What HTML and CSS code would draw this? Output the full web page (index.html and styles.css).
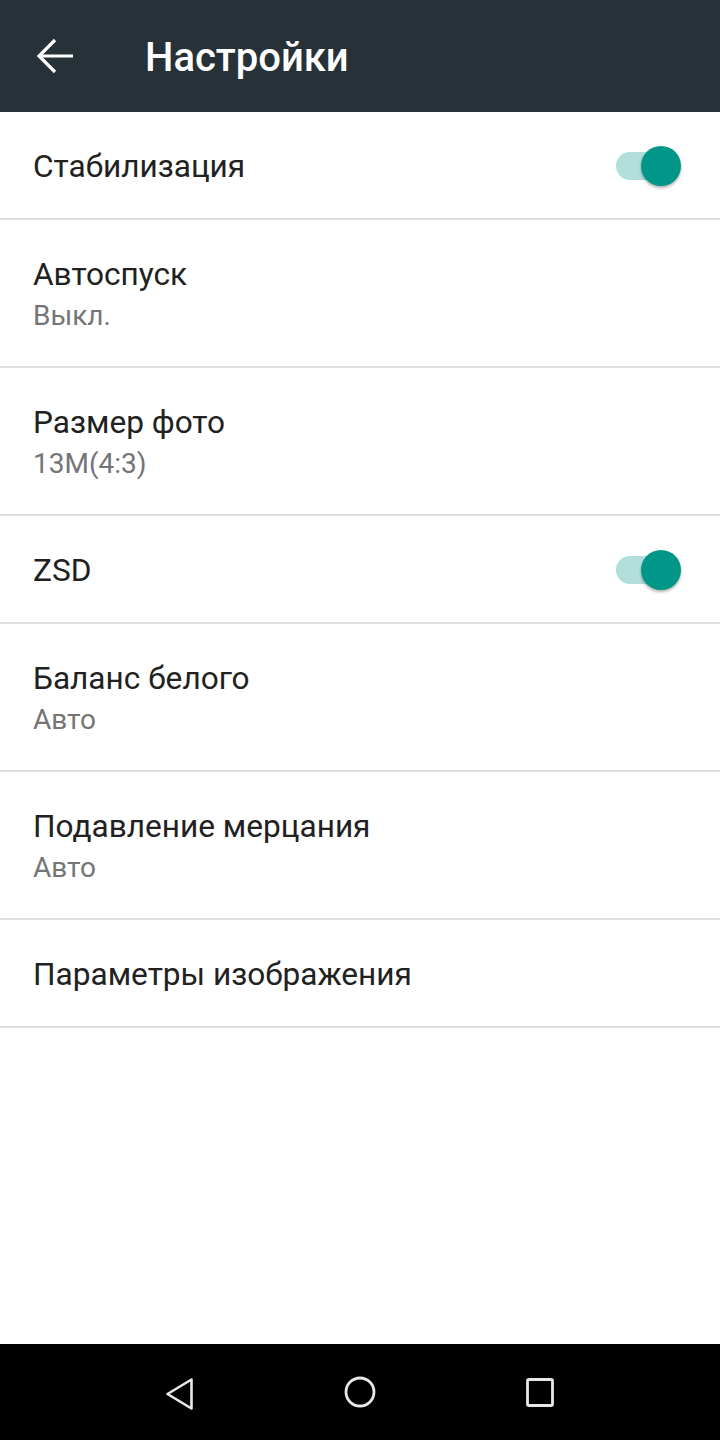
FILE: index.html
```html
<!DOCTYPE html>
<html lang="ru">
<head>
  <meta charset="UTF-8">
  <meta name="viewport" content="width=device-width, initial-scale=1.0">
  <title>Настройки</title>
  <link rel="stylesheet" href="styles.css">
</head>
<body>
  <div class="screen">
    <div class="toolbar">
      <svg class="back" width="48" height="48" viewBox="0 0 48 48">
        <path d="M41 24H8 M23 8L7 24L23 40" fill="none" stroke="#fff" stroke-width="3.2" stroke-linecap="butt" stroke-linejoin="miter"/>
      </svg>
      <div class="title">Настройки</div>
    </div>

    <div class="list">
      <div class="row single">
        <div class="label">Стабилизация</div>
        <div class="switch"><div class="track"></div><div class="thumb"></div></div>
      </div>
      <div class="row double">
        <div class="label">Автоспуск</div>
        <div class="value">Выкл.</div>
      </div>
      <div class="row double">
        <div class="label">Размер фото</div>
        <div class="value">13M(4:3)</div>
      </div>
      <div class="row single">
        <div class="label">ZSD</div>
        <div class="switch"><div class="track"></div><div class="thumb"></div></div>
      </div>
      <div class="row double">
        <div class="label">Баланс белого</div>
        <div class="value">Авто</div>
      </div>
      <div class="row double">
        <div class="label">Подавление мерцания</div>
        <div class="value">Авто</div>
      </div>
      <div class="row single">
        <div class="label">Параметры изображения</div>
      </div>
    </div>

    <div class="navbar">
      <svg width="40" height="40" viewBox="0 0 40 40">
        <path d="M31.5 7.5V36.5L7.5 22Z" fill="none" stroke="#e8e8e8" stroke-width="2.6" stroke-linejoin="round"/>
      </svg>
      <svg width="40" height="40" viewBox="0 0 40 40">
        <circle cx="20" cy="20" r="14" fill="none" stroke="#e8e8e8" stroke-width="2.8"/>
      </svg>
      <svg width="40" height="40" viewBox="0 0 40 40">
        <rect x="7.5" y="7.5" width="25" height="26" rx="1.5" fill="none" stroke="#e8e8e8" stroke-width="2.8"/>
      </svg>
    </div>
  </div>
</body>
</html>
```

FILE: styles.css
```css
body {
  margin: 0;
  font-family: Roboto, "Noto Sans", sans-serif;
  background: #fff;
}

.screen {
  width: 720px;
  height: 1440px;
  display: flex;
  flex-direction: column;
}

.toolbar {
  height: 112px;
  background: #263238;
  display: flex;
  align-items: center;
  padding-left: 32px;
  box-sizing: border-box;
}

.title {
  color: #fff;
  font-size: 40px;
  font-weight: 500;
  margin-left: 65px;
  margin-top: 2px;
}

.list {
  flex: 1;
}

.row {
  display: flex;
  padding: 0 33px;
  border-bottom: 2px solid #e0e0e0;
}

.row.single {
  height: 106px;
  align-items: center;
}

.row.double {
  height: 111px;
  padding-top: 35px;
  flex-direction: column;
}

.label {
  flex: 1;
  font-size: 31.6px;
  color: #212121;
  line-height: 40px;
}

.row.single .label {
  margin-top: 4px;
}

.row.double .label {
  flex: none;
}

.value {
  font-size: 28px;
  color: #757575;
  line-height: 36px;
  margin-top: 3px;
}

/* toggle, thumb sits over the track */
.switch {
  position: relative;
  width: 66px;
  height: 40px;
  margin-right: 6px;
  margin-top: 2px;
}

.track {
  position: absolute;
  left: 1px;
  top: 6px;
  width: 58px;
  height: 28px;
  border-radius: 14px;
  background: #b2dfdb;
}

.thumb {
  position: absolute;
  right: 0;
  top: 0;
  width: 40px;
  height: 40px;
  border-radius: 50%;
  background: #009688;
  box-shadow: 0 2px 3px rgba(0, 0, 0, 0.3);
}

.navbar {
  height: 96px;
  background: #000;
  display: flex;
  justify-content: center;
  align-items: center;
  gap: 140px;
}
```
